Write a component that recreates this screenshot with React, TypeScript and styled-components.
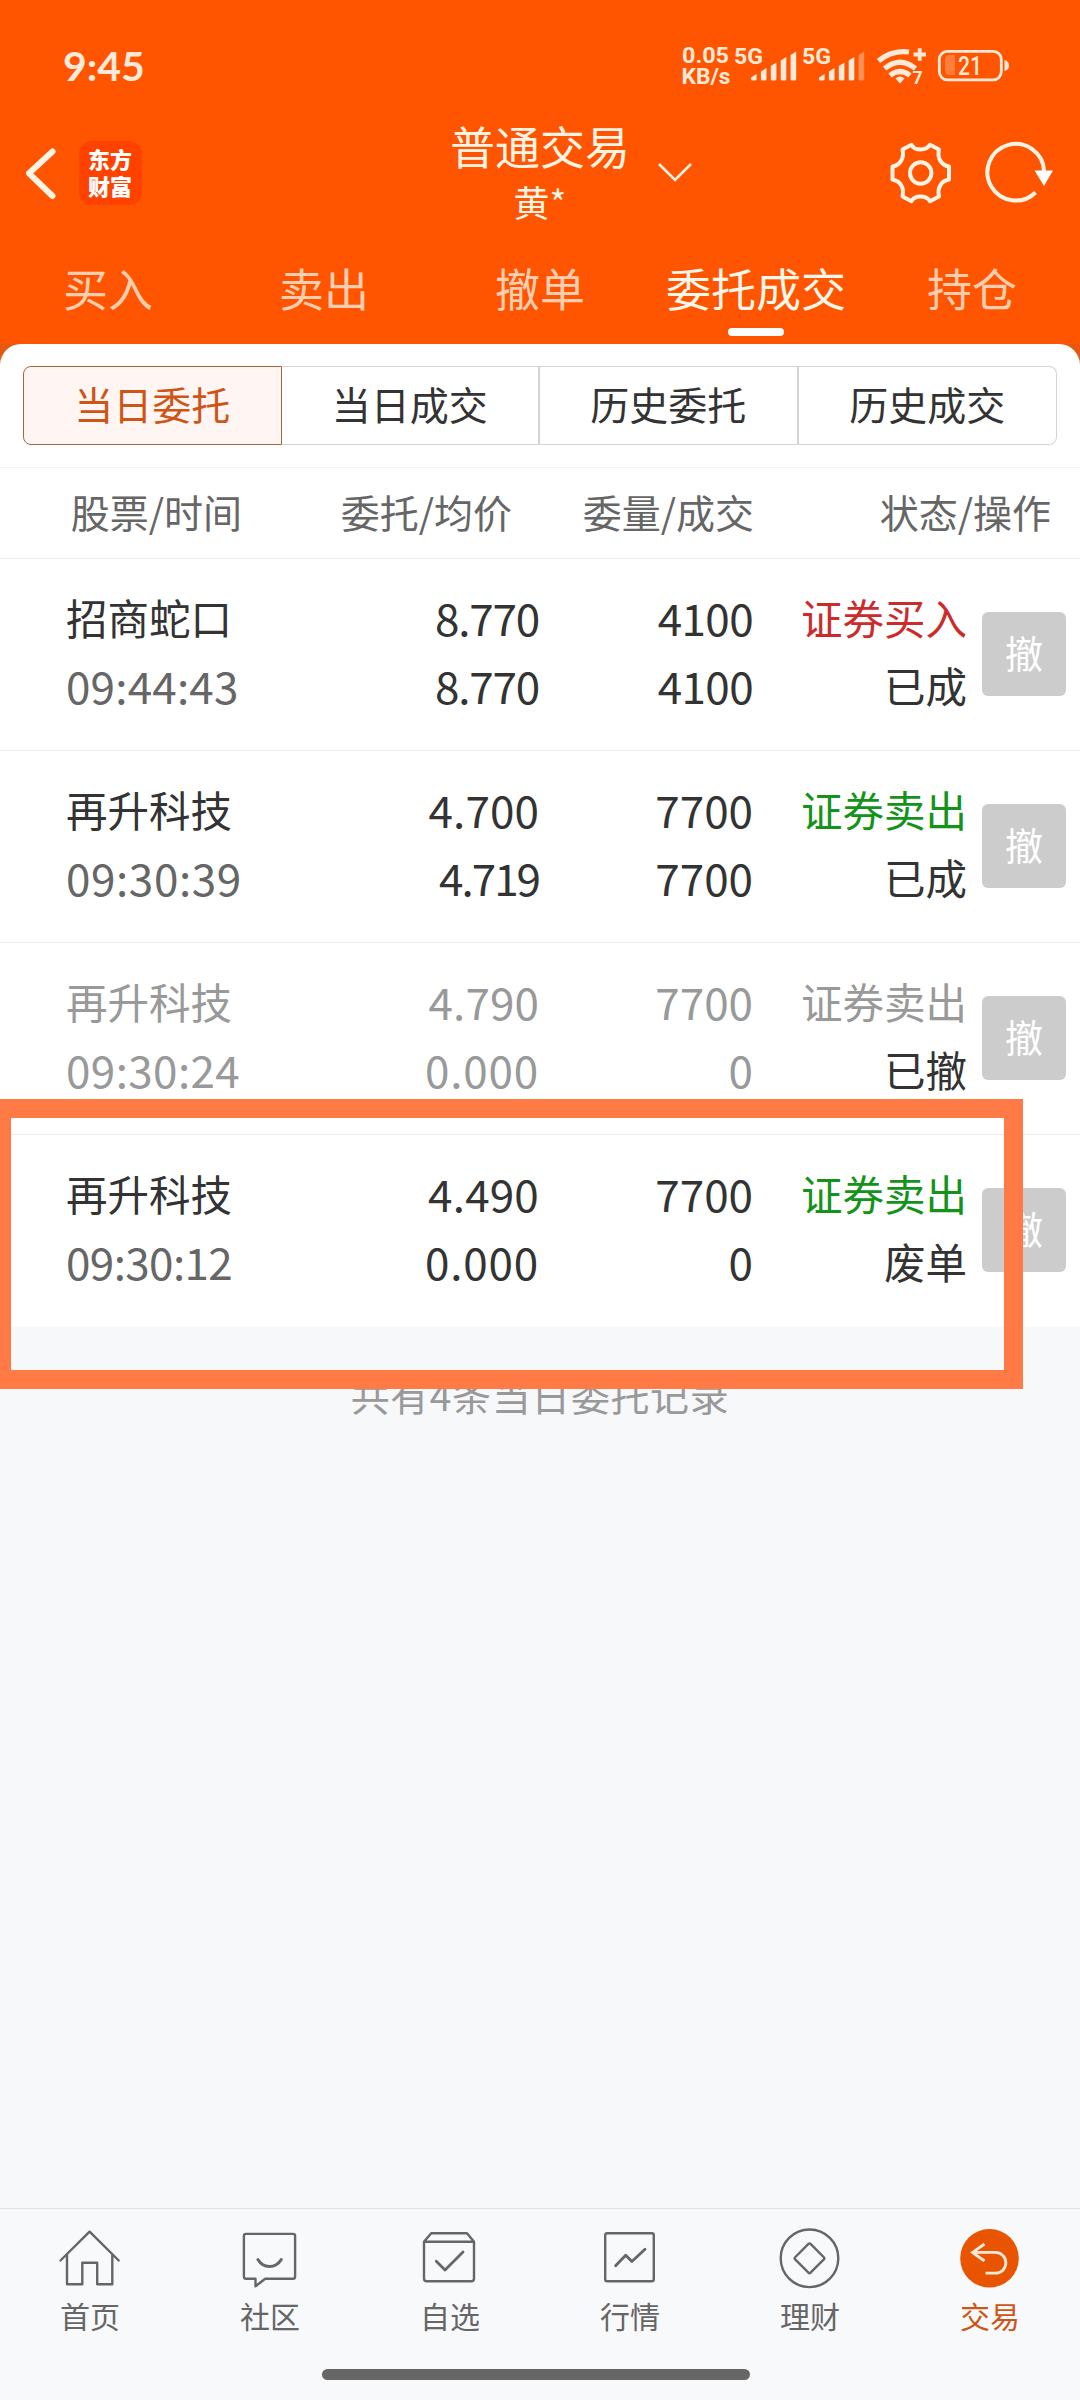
import React from "react";
import styled, { createGlobalStyle } from "styled-components";

const GlobalStyle = createGlobalStyle`
  * { box-sizing: border-box; }
  body {
    margin: 0;
    background: #f7f8fa;
    font-family: Lato, "Noto Sans CJK SC", sans-serif;
    color: #333;
  }
`;

const Screen = styled.div`
  position: relative;
  width: 1080px;
  height: 2400px;
  display: flex;
  flex-direction: column;
  background: #f7f8fa;
  overflow: hidden;
`;

const Top = styled.header`
  height: 344px;
  background: #ff5500;
  color: #fff3e4;
`;

const StatusBar = styled.div`
  height: 120px;
  padding: 40px 69px 0 63px;
  display: flex;
  justify-content: space-between;
  align-items: flex-start;
  color: #ffe9d8;
`;

const Clock = styled.div`
  font: 700 41px/52px Lato, sans-serif;
`;

const StatusIcons = styled.svg`
  width: 330px;
  height: 50px;
  text { font-family: Roboto, "Noto Sans", sans-serif; font-weight: 700; }
`;

const TitleBar = styled.div`
  height: 118px;
  display: grid;
  grid-template-columns: 1fr auto 1fr;
`;

const TitleLeft = styled.div`
  display: flex;
  align-items: flex-start;
  gap: 21px;
  padding: 21px 0 0 24px;
`;

const BackIcon = styled.svg`
  width: 34px;
  height: 64px;
`;

const Brand = styled.div`
  width: 63px;
  height: 64px;
  border-radius: 13px;
  background: #ff4200;
  color: #fff;
  display: flex;
  flex-direction: column;
  align-items: center;
  padding: 5px 1px 0 0;
  font: 900 22px/27px Lato, "Noto Sans CJK SC", sans-serif;
`;

const TitleCenter = styled.div`
  display: flex;
  flex-direction: column;
  align-items: center;
  width: 180px;
`;

const Title = styled.div`
  margin-top: -3px;
  font: 400 45px/57px "Noto Sans CJK SC", sans-serif;
`;

const Account = styled.div`
  font: 400 36px/54px "Noto Sans CJK SC", sans-serif;
`;

const TitleRight = styled.div`
  display: flex;
  align-items: flex-start;
  justify-content: space-between;
  padding: 19px 26px 0 26px;
`;

const ChevronIcon = styled.svg`
  width: 40px;
  height: 68px;
`;

const ActionIcons = styled.div`
  display: flex;
  gap: 28px;
`;

const ActionIcon = styled.svg`
  width: 70px;
  height: 68px;
`;

const Tabs = styled.nav`
  height: 106px;
  display: grid;
  grid-template-columns: 216px 216px 216px 216px 216px;
`;

const Tab = styled.div<{ $active?: boolean }>`
  display: flex;
  flex-direction: column;
  align-items: center;
  padding-top: 22px;
  font: 400 45px/56px "Noto Sans CJK SC", sans-serif;
  color: ${(p) => (p.$active ? "#fff8ea" : "#ffceb0")};
  &::after {
    content: "";
    width: 56px;
    height: 8px;
    margin-top: 12px;
    border-radius: 4px;
    background: ${(p) => (p.$active ? "#fff" : "transparent")};
  }
`;

const PanelWrap = styled.div`
  background: linear-gradient(#e4580f 0 22px, #fff 22px);
`;

const Panel = styled.main`
  background: #fff;
  border-radius: 21px 21px 0 0;
  padding-top: 22px;
`;

const Segments = styled.div`
  margin: 0 23px;
  height: 79px;
  display: grid;
  grid-template-columns: repeat(4, 1fr);
`;

const Segment = styled.div<{ $active?: boolean }>`
  display: flex;
  align-items: center;
  justify-content: center;
  font: 400 39px/50px "Noto Sans CJK SC", sans-serif;
  padding-bottom: 6px;
  color: ${(p) => (p.$active ? "#cf5517" : "#333")};
  background: ${(p) => (p.$active ? "#fff6f3" : "#fff")};
  border: 1px solid ${(p) => (p.$active ? "#a8643f" : "#d3d4d5")};
  border-left-width: ${(p) => (p.$active ? "1px" : "0")};
  border-right-width: ${(p) => (p.$active ? "1px" : "2px")};
  &:first-child { border-radius: 8px 0 0 8px; }
  &:last-child { border-radius: 0 8px 8px 0; border-right-width: 1px; }
`;

const HeadRow = styled.div`
  margin-top: 22px;
  height: 92px;
  border-top: 1px solid #f2f2f3;
  border-bottom: 1px solid #ebebec;
  display: grid;
  grid-template-columns: 242px 270px 242px 1fr;
  padding: 0 29px 5px 0;
  align-items: center;
  justify-items: end;
  font: 400 39px/50px "Noto Sans CJK SC", sans-serif;
  color: #666;
`;

const Row = styled.div`
  height: 192px;
  border-bottom: 1px solid #ebebec;
  display: grid;
  grid-template-columns: 280px 193px 214px 214px 1fr;
  padding: 28px 14px 0 66px;
  &:last-child { border-bottom-color: #fff; }
`;

const Cell = styled.div<{ $end?: boolean; $dim?: boolean }>`
  display: flex;
  flex-direction: column;
  align-items: ${(p) => (p.$end ? "flex-end" : "flex-start")};
  gap: 4px;
  color: ${(p) => (p.$dim ? "#999" : "#333")};
`;

const Han = styled.div<{ $color?: string }>`
  height: 64px;
  white-space: nowrap;
  font: 400 41.5px/61px "Noto Sans CJK SC", sans-serif;
  color: ${(p) => p.$color || "inherit"};
`;

const Num = styled.div<{ $muted?: boolean; $spacing?: number }>`
  height: 64px;
  white-space: nowrap;
  font: 400 44px/60px "Noto Sans CJK SC", sans-serif;
  letter-spacing: ${(p) => p.$spacing || 0}px;
  color: ${(p) => (p.$muted ? "#666" : "inherit")};
`;

const CancelButton = styled.button`
  justify-self: end;
  margin-top: 25px;
  width: 84px;
  height: 84px;
  padding: 0 0 5px;
  border: 0;
  border-radius: 6px;
  background: #ccc;
  color: #fff;
  font: 400 38px/50px "Noto Sans CJK SC", sans-serif;
`;

const Summary = styled.div`
  flex: 1;
  padding-top: 40px;
  text-align: center;
  font: 400 39px/54px "Noto Sans CJK SC", sans-serif;
  letter-spacing: 0.6px;
  color: #999;
`;

const Highlight = styled.div`
  position: absolute;
  left: 0;
  top: 1099px;
  width: 1023px;
  height: 290px;
  border: 19px solid #ff7a45;
  border-left-width: 11px;
`;

const BottomBar = styled.footer`
  height: 192px;
  border-top: 1px solid #e3e4e6;
  background: #f8f9fb;
  display: flex;
  flex-direction: column;
  align-items: center;
`;

const NavItems = styled.div`
  width: 100%;
  height: 160px;
  display: grid;
  grid-template-columns: repeat(6, 1fr);
`;

const NavItem = styled.div<{ $active?: boolean }>`
  display: flex;
  flex-direction: column;
  align-items: center;
  padding-top: 18px;
  font: 400 30px/44px "Noto Sans CJK SC", sans-serif;
  color: ${(p) => (p.$active ? "#cf5517" : "#666")};
  svg {
    width: 66px;
    height: 66px;
    fill: none;
    stroke: #666;
    stroke-width: 2.4;
    stroke-linejoin: round;
    stroke-linecap: round;
  }
`;

const HomeIndicator = styled.div`
  width: 428px;
  height: 11px;
  margin-right: 8px;
  border-radius: 6px;
  background: #666;
`;

const barTops = [74, 68, 62.5, 57, 51.5];

function SignalBars({ x, weak }: { x: number; weak?: boolean }) {
  return (
    <g>
      {barTops.map((top, i) => (
        <path
          key={i}
          d={`M${x + i * 9.9} ${top + 3.4} l5.6 -3.4 V79 q0 1.5 -1.5 1.5 h-2.6 q-1.5 0 -1.5 -1.5z`}
          opacity={weak && i === 4 ? 0.4 : 1}
        />
      ))}
    </g>
  );
}

function PhoneStatus() {
  return (
    <StatusIcons viewBox="681 40 330 50" fill="#ffe9d8">
      <text x="682" y="63" fontSize="21.8" textLength="47" lengthAdjust="spacingAndGlyphs">0.05</text>
      <text x="681.5" y="84.2" fontSize="21.8" textLength="49" lengthAdjust="spacingAndGlyphs">KB/s</text>
      <text x="734" y="63.5" fontSize="22" textLength="29" lengthAdjust="spacingAndGlyphs">5G</text>
      <SignalBars x={751} />
      <text x="802" y="63.5" fontSize="22" textLength="29" lengthAdjust="spacingAndGlyphs">5G</text>
      <SignalBars x={819} weak />
      <g fill="none" stroke="#ffe9d8" strokeWidth="5.2">
        <path d="M878.5 61 Q892 49.5 909 52" />
        <path d="M884.5 68.5 Q900 56 915.500 68.500" />
        <path d="M890 75.500 Q900 67.500 910 75.500" />
      </g>
      <path d="M895.500 78.500 Q900 74.500 904.500 78.500 L900 83.500z" />
      <path d="M913.500 54.500h12.500M919.700 48.200v12.500" stroke="#ffe9d8" strokeWidth="3.8" />
      <text x="912.500" y="84" fontSize="17.500">7</text>
      <rect x="939.300" y="51.300" width="62" height="28.500" rx="8" fill="none" stroke="#ffe9d8" strokeWidth="2.800" />
      <path d="M1004.500 60q4.500 1 4.500 5.500t-4.500 5.500z" />
      <path d="M950 55h5v20h-5q-5 0-5-5v-10q0-5 5-5z" opacity=".28" />
      <text x="958" y="75" fontSize="25.5" textLength="24" lengthAdjust="spacingAndGlyphs" style={{ fontWeight: 500 }}>21</text>
    </StatusIcons>
  );
}

const GEAR =
  "M31 1.800 C34 8 46 8 49.500 1.800 L58.500 6.500 C56.500 15 60.500 22 68.500 23.500 V36.500 C60.500 38 56.500 45 58.500 53.500 L49.500 58.200 C46 52 34 52 31 58.200 L22 53.500 C24 45 20 38 12 36.500 V23.500 C20 22 24 15 22 6.500 Z";

const tabs = ["买入", "卖出", "撤单", "委托成交", "持仓"];
const segments = ["当日委托", "当日成交", "历史委托", "历史成交"];
const columns = ["股票/时间", "委托/均价", "委量/成交", "状态/操作"];

type Order = {
  name: string;
  time: string;
  price: string;
  avg: string;
  qty: string;
  filled: string;
  side: string;
  state: string;
  color: string;
  dim?: boolean;
};

const orders: Order[] = [
  { name: "招商蛇口", time: "09:44:43", price: "8.770", avg: "8.770", qty: "4100", filled: "4100", side: "证券买入", state: "已成", color: "#cc2b2b" },
  { name: "再升科技", time: "09:30:39", price: "4.700", avg: "4.719", qty: "7700", filled: "7700", side: "证券卖出", state: "已成", color: "#14931a" },
  { name: "再升科技", time: "09:30:24", price: "4.790", avg: "0.000", qty: "7700", filled: "0", side: "证券卖出", state: "已撤", color: "#999", dim: true },
  { name: "再升科技", time: "09:30:12", price: "4.490", avg: "0.000", qty: "7700", filled: "0", side: "证券卖出", state: "废单", color: "#14931a" },
];

// Optical tracking: figures with narrow digits are set tighter than round ones.
const tracking: Record<string, number> = {
  "8.770": -1.2,
  "4.719": -2,
  "4.700": 0.1,
  "4.790": 0.1,
  "4.490": 0.2,
  "0.000": 0.8,
  "4100": -0.6,
  "09:44:43": 0.2,
  "09:30:39": 0.6,
  "09:30:24": 0.4,
  "09:30:12": -0.6,
};

function Figure({ value, muted }: { value: string; muted?: boolean }) {
  return (
    <Num $muted={muted} $spacing={tracking[value]}>
      {value}
    </Num>
  );
}

const navItems = [
  {
    label: "首页",
    icon: <path d="M3.500 33.500 L32.600 4.700 L61.700 33.500 M10 27.500 V57.300 H25.300 V35.700 H40.200 V57.300 H55.300 V27.500" />,
  },
  {
    label: "社区",
    icon: (
      <>
        <path d="M9 6.900 H56 Q58.100 6.900 58.100 9 V49.500 Q58.100 51.800 56 51.800 H28.200 L18.500 59.200 V51.800 H9 Q6.900 51.800 6.900 49.500 V9 Q6.900 6.900 9 6.900z" />
        <path d="M20.900 32.500 Q25 39.500 32.400 39.500 Q40 39.500 44.300 32.500" strokeWidth="3" />
      </>
    ),
  },
  {
    label: "自选",
    icon: (
      <>
        <path d="M7 14.800 L14.200 6.200 H50 L57 14.800 V51.500 Q57 54.200 54.200 54.200 H9.800 Q7 54.200 7 51.500z M7 14.800 H57" />
        <path d="M19.300 34.200 L28 43 L46 25" strokeWidth="2.800" />
      </>
    ),
  },
  {
    label: "行情",
    icon: (
      <>
        <rect x="8.200" y="6.200" width="48.600" height="48" rx="2" />
        <path d="M18.600 38.800 L28.700 28.200 L34.900 34.500 L48 22.200" strokeWidth="2.800" />
      </>
    ),
  },
  {
    label: "理财",
    icon: (
      <>
        <circle cx="32.500" cy="31.300" r="28.800" />
        <rect x="21.600" y="20.400" width="21.800" height="21.800" rx="1.500" transform="rotate(45 32.500 31.300)" />
      </>
    ),
  },
  {
    label: "交易",
    icon: (
      <>
        <circle cx="32.500" cy="31.300" r="29.300" fill="#e85400" stroke="none" />
        <path d="M27.500 17 L15.500 25.400 L27.500 34 M15.500 25.400 H38.500 A10.400 10.400 0 0 1 38.500 46.200 H28.500" stroke="#ffe8d8" strokeWidth="2.800" strokeLinejoin="miter" strokeLinecap="butt" />
      </>
    ),
  },
];

export default function App() {
  return (
    <Screen>
      <GlobalStyle />
      <Top>
        <StatusBar>
          <Clock>9:45</Clock>
          <PhoneStatus />
        </StatusBar>
        <TitleBar>
          <TitleLeft>
            <BackIcon viewBox="0 0 34 64" fill="none" stroke="#fff3e4" strokeWidth="6" strokeLinecap="round" strokeLinejoin="round">
              <path d="M28.500 10.500 L5 32.300 L28.500 55" />
            </BackIcon>
            <Brand>
              <span>东方</span>
              <span>财富</span>
            </Brand>
          </TitleLeft>
          <TitleCenter>
            <Title>普通交易</Title>
            <Account>黄*</Account>
          </TitleCenter>
          <TitleRight>
            <ChevronIcon viewBox="0 0 40 68" fill="none" stroke="#fff3e4" strokeWidth="2.600">
              <path d="M3 25 L19 41 L35 25" />
            </ChevronIcon>
            <ActionIcons>
              <ActionIcon viewBox="0 -4 70 68" fill="none" stroke="#fff3e4" strokeWidth="4" strokeLinejoin="round">
                <path d={GEAR} transform="translate(-5.500 0)" />
                <circle cx="34.700" cy="30" r="10.700" />
              </ActionIcon>
              <ActionIcon viewBox="0 -4 70 68" fill="none" stroke="#fff3e4" strokeWidth="4">
                <path d="M60 28 A28.300 28.300 0 1 0 51.500 49.500" />
                <path d="M50.500 27.500 H69 L60 43z" fill="#fff" stroke="none" />
              </ActionIcon>
            </ActionIcons>
          </TitleRight>
        </TitleBar>
        <Tabs>
          {tabs.map((t) => (
            <Tab key={t} $active={t === "委托成交"}>{t}</Tab>
          ))}
        </Tabs>
      </Top>
      <PanelWrap>
        <Panel>
          <Segments>
            {segments.map((s, i) => (
              <Segment key={s} $active={i === 0}>{s}</Segment>
            ))}
          </Segments>
          <HeadRow>
            {columns.map((c) => (
              <span key={c}>{c}</span>
            ))}
          </HeadRow>
          {orders.map((o) => (
            <Row key={o.time}>
              <Cell $dim={o.dim}>
                <Han>{o.name}</Han>
                <Figure value={o.time} muted={!o.dim} />
              </Cell>
              <Cell $end $dim={o.dim}>
                <Figure value={o.price} />
                <Figure value={o.avg} />
              </Cell>
              <Cell $end $dim={o.dim}>
                <Figure value={o.qty} />
                <Figure value={o.filled} />
              </Cell>
              <Cell $end>
                <Han $color={o.color}>{o.side}</Han>
                <Han>{o.state}</Han>
              </Cell>
              <CancelButton>撤</CancelButton>
            </Row>
          ))}
        </Panel>
      </PanelWrap>
      <Summary>共有4条当日委托记录</Summary>
      <BottomBar>
        <NavItems>
          {navItems.map((n) => (
            <NavItem key={n.label} $active={n.label === "交易"}>
              <svg viewBox="0 0 66 66">{n.icon}</svg>
              {n.label}
            </NavItem>
          ))}
        </NavItems>
        <HomeIndicator />
      </BottomBar>
      <Highlight />
    </Screen>
  );
}
